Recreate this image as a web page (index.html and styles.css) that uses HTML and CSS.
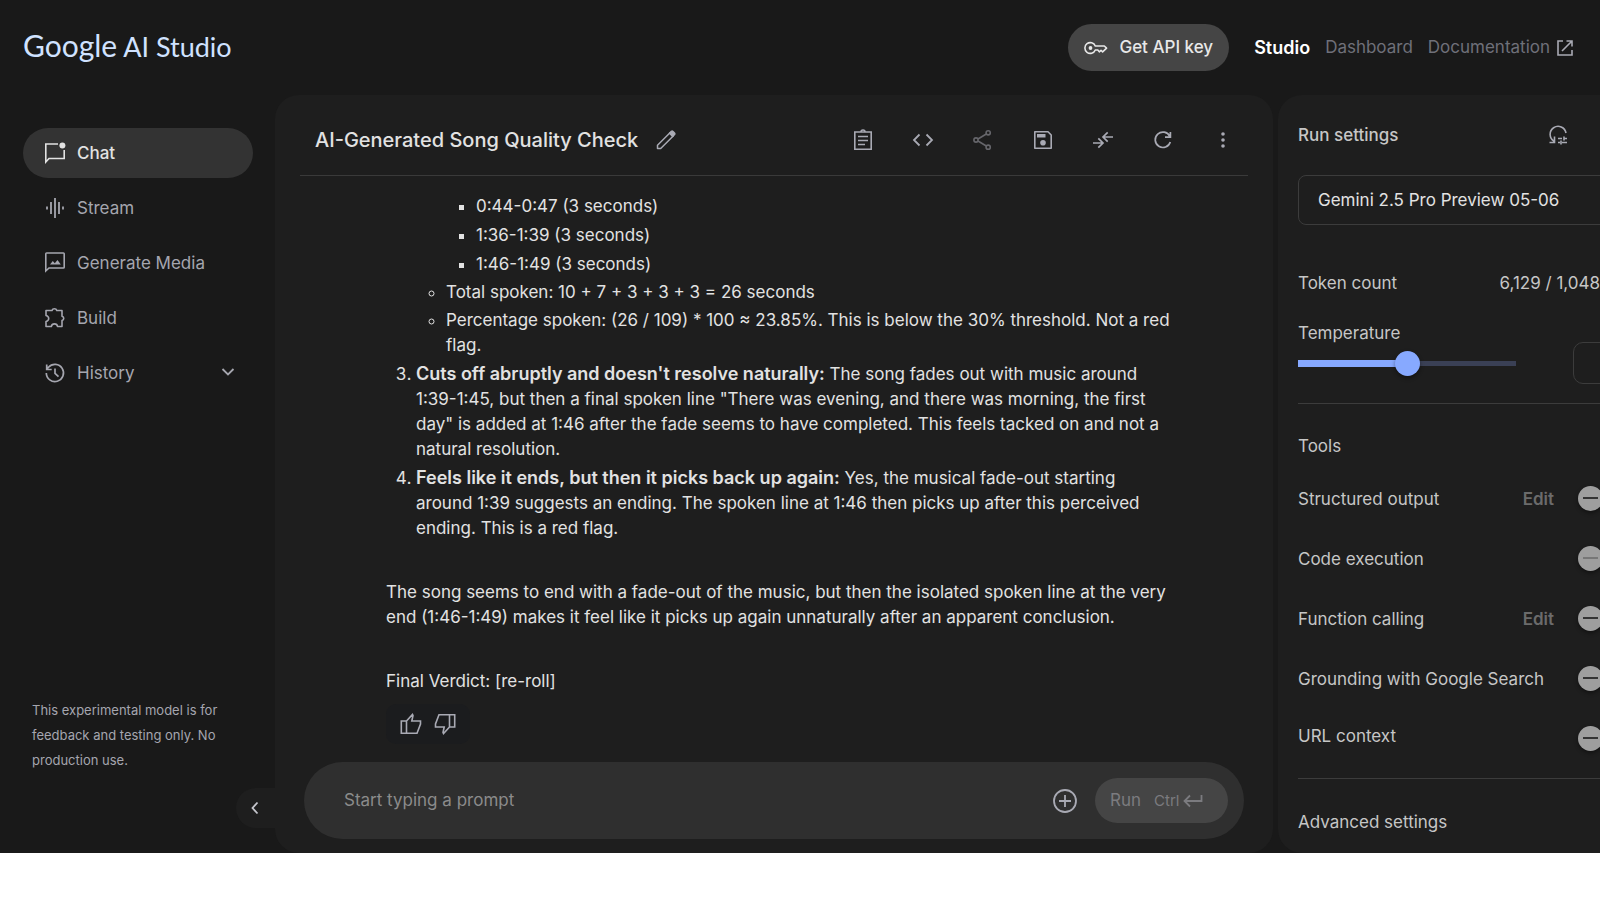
FILE: index.html
```html
<!DOCTYPE html>
<html lang="en">
<head>
<meta charset="utf-8">
<title>Google AI Studio</title>
<link rel="stylesheet" href="styles.css">
</head>
<body>
<div class="app">
  <header class="topbar">
    <div class="logo"><span class="logo-google">Google</span> <span>AI Studio</span></div>
    <nav class="topnav">
      <button class="api-key" type="button">
        <svg width="24" height="16" viewBox="0 0 24 16" fill="none" stroke="currentColor" stroke-width="1.6"><path d="M11.300 6A5.400 5.400 0 1 0 11.300 10H13.800l1.500 1.800 1.700-1.500 1.600 1.600 4-3.700-2.300-2.200z" stroke-linejoin="round"/><circle cx="6.500" cy="8" r="1.900" fill="currentColor" stroke="none"/></svg>
        Get API key
      </button>
      <a class="active" href="#studio">Studio</a>
      <a href="#dashboard">Dashboard</a>
      <a class="docs" href="#docs">Documentation
        <svg width="16" height="16" viewBox="0 0 16 16" fill="none" stroke="currentColor" stroke-width="1.6"><path d="M6 1H1v14h14v-5M9.500 1H15v5.500M15 1 5 11"/></svg>
      </a>
    </nav>
  </header>

  <div class="body">
    <aside class="sidebar">
      <nav class="menu">
        <a class="menu-item selected" href="#chat">
          <svg width="22" height="22" viewBox="0 0 22 22" fill="none" stroke="currentColor" stroke-width="1.6"><path d="M14 2H1.800v18L5 16.500h15.200V8"/><circle cx="18.400" cy="3.400" r="3" fill="currentColor" stroke="none"/></svg>
          Chat
        </a>
        <a class="menu-item" href="#stream">
          <svg width="22" height="22" viewBox="0 0 22 22" fill="none" stroke="currentColor" stroke-width="1.8"><path d="M3 9.500v3M7 5v12M11 1v20M15 5v12M19 9.500v3"/></svg>
          Stream
        </a>
        <a class="menu-item" href="#media">
          <svg width="22" height="22" viewBox="0 0 22 22" fill="none" stroke="currentColor" stroke-width="1.6"><path d="M1.800 19V1.800Q1.800 1 2.600 1H19.400Q20.200 1 20.200 1.800V15.200Q20.200 16 19.400 16H5z"/><path d="M6 12.500 8.800 9l2 2.300L13.500 8l3.300 4.500z" fill="currentColor" stroke="none"/></svg>
          Generate Media
        </a>
        <a class="menu-item" href="#build">
          <svg width="22" height="22" viewBox="0 0 22 22" fill="none" stroke="currentColor" stroke-width="1.600" stroke-linejoin="round"><path d="M2 3.500H8A2.500 2.500 0 0 1 12.800 3.500H18V9.200A2.200 2.200 0 0 1 18 13.500V19.500H13.500C13 16 8 16 7.300 19.500H2V14.500C5.600 13.500 5.600 9.500 2 8.500z"/></svg>
          Build
        </a>
        <a class="menu-item" href="#history">
          <svg width="22" height="22" viewBox="0 0 22 22" fill="none" stroke="currentColor" stroke-width="1.700"><path d="M2.300 11A8.600 8.600 0 1 0 4.500 5.200L2.500 7.300M2.700 2.500v5h5M11 6.500V11.300l3.500 3.300"/></svg>
          History
          <svg class="caret" width="14" height="14" viewBox="0 0 14 14" fill="none" stroke="currentColor" stroke-width="1.800"><path d="M1.500 3 7 8.500 12.500 3"/></svg>
        </a>
      </nav>
      <p class="notice">This experimental model is for<br>feedback and testing only. No<br>production use.</p>
      <button class="collapse" type="button" aria-label="Collapse sidebar">
        <svg width="14" height="14" viewBox="0 0 14 14" fill="none" stroke="currentColor" stroke-width="1.800"><path d="M9.500 1.500 4.500 7l5 5.500"/></svg>
      </button>
    </aside>

    <main class="panel chat">
      <div class="chat-head">
        <h1>AI-Generated Song Quality Check</h1>
        <button class="icon" type="button" aria-label="Edit title">
          <svg width="20" height="20" viewBox="0 0 20 20" fill="none" stroke="currentColor" stroke-width="1.500" stroke-linejoin="round"><path d="M1.500 18.500v-3.200L14 2.800l3.200 3.200L4.700 18.500z"/><path d="m13.500 3.300 1.900-1.900Q16.200.800 17 1.500L18.500 3Q19.200 3.800 18.500 4.600L16.700 6.500z" fill="currentColor"/></svg>
        </button>
        <div class="tools">
          <button class="icon" type="button" aria-label="System instructions">
            <svg width="22" height="22" viewBox="0 0 22 22" fill="none" stroke="currentColor" stroke-width="1.600"><path d="M2.800 3H19.200V20.200H2.800zM6 7.500H16M6 11.500H16M6 15.500H13"/><path d="M9 3a2 2 0 0 1 4 0"/></svg>
          </button>
          <button class="icon" type="button" aria-label="Get code">
            <svg width="22" height="22" viewBox="0 0 22 22" fill="none" stroke="currentColor" stroke-width="1.800"><path d="M7.500 5.500 2 11l5.500 5.500M14.500 5.500 20 11l-5.500 5.500"/></svg>
          </button>
          <button class="icon" type="button" aria-label="Share" disabled>
            <svg width="22" height="22" viewBox="0 0 22 22" fill="none" stroke="currentColor" stroke-width="1.600"><circle cx="4" cy="11" r="2.100"/><circle cx="16.200" cy="3.800" r="2.100"/><circle cx="16.200" cy="18.200" r="2.100"/><path d="M6 10 14.300 5M6 12l8.300 5"/></svg>
          </button>
          <button class="icon" type="button" aria-label="Save">
            <svg width="22" height="22" viewBox="0 0 22 22" fill="none" stroke="currentColor" stroke-width="1.600" stroke-linejoin="round"><path d="M2.800 2.800H16L19.200 6V19.200H2.800z"/><path d="M5 5H13.500V8.500H5z" fill="currentColor" stroke="none"/><circle cx="11" cy="13.700" r="2.800" fill="currentColor" stroke="none"/></svg>
          </button>
          <button class="icon" type="button" aria-label="Compare">
            <svg width="22" height="22" viewBox="0 0 22 22" fill="none" stroke="currentColor" stroke-width="1.700"><path d="M1 14H10.500M6.300 9.300 11 14 6.300 18.700M21 8H11.500M15.700 3.300 11 8 15.700 12.700"/></svg>
          </button>
          <button class="icon" type="button" aria-label="Refresh">
            <svg width="22" height="22" viewBox="0 0 22 22" fill="none" stroke="currentColor" stroke-width="1.700"><path d="M18.300 13A7.700 7.700 0 1 1 17.800 7.300M18.400 3V8.200H13"/></svg>
          </button>
          <button class="icon" type="button" aria-label="More">
            <svg width="22" height="22" viewBox="0 0 22 22" fill="currentColor"><circle cx="11" cy="5" r="1.800"/><circle cx="11" cy="11" r="1.800"/><circle cx="11" cy="17" r="1.800"/></svg>
          </button>
        </div>
      </div>

      <div class="answer">
        <ol start="2">
          <li class="continued">
            <ul>
              <li class="bare"><ul class="times">
                <li>0:44-0:47 (3 seconds)</li>
                <li>1:36-1:39 (3 seconds)</li>
                <li>1:46-1:49 (3 seconds)</li>
              </ul></li>
              <li>Total spoken: 10 + 7 + 3 + 3 + 3 = 26 seconds</li>
              <li>Percentage spoken: (26 / 109) * 100 ≈ 23.85%. This is below the 30% threshold. Not a red<br>flag.</li>
            </ul>
          </li>
          <li><strong>Cuts off abruptly and doesn't resolve naturally:</strong> The song fades out with music around<br>1:39-1:45, but then a final spoken line "There was evening, and there was morning, the first<br>day" is added at 1:46 after the fade seems to have completed. This feels tacked on and not a<br>natural resolution.</li>
          <li><strong>Feels like it ends, but then it picks back up again:</strong> Yes, the musical fade-out starting<br>around 1:39 suggests an ending. The spoken line at 1:46 then picks up after this perceived<br>ending. This is a red flag.</li>
        </ol>
        <p>The song seems to end with a fade-out of the music, but then the isolated spoken line at the very<br>end (1:46-1:49) makes it feel like it picks up again unnaturally after an apparent conclusion.</p>
        <p>Final Verdict: [re-roll]</p>
        <div class="feedback">
          <button class="icon" type="button" aria-label="Good response">
            <svg width="22" height="22" viewBox="0 0 22 22" fill="none" stroke="currentColor" stroke-width="1.600"><path d="M1.300 8H6.500V20.200H1.300zM6.500 8 12.500 1.500 13 2.500 11.800 8H20.500V11L17 20.200H6.500"/></svg>
          </button>
          <button class="icon" type="button" aria-label="Bad response">
            <svg width="22" height="22" viewBox="0 0 22 22" fill="none" stroke="currentColor" stroke-width="1.600"><path d="M20.700 14H15.500V1.800H20.700zM15.500 14 9.500 20.500 9 19.500 10.200 14H1.500V11L5 1.800H15.500"/></svg>
          </button>
        </div>
      </div>

      <form class="prompt">
        <input type="text" placeholder="Start typing a prompt" aria-label="Prompt">
        <button class="icon" type="button" aria-label="Insert assets">
          <svg width="26" height="26" viewBox="0 0 26 26" fill="none" stroke="currentColor" stroke-width="1.800"><circle cx="13" cy="13" r="11"/><path d="M13 7v12M7 13h12"/></svg>
        </button>
        <button class="run" type="button" disabled>Run
          <span class="keys">Ctrl<svg width="20" height="14" viewBox="0 0 20 14" fill="none" stroke="currentColor" stroke-width="1.800"><path d="M18.500 1V7H2M7 1.500 1.500 7 7 12.500"/></svg></span>
        </button>
      </form>
    </main>

    <aside class="panel settings">
      <div class="settings-inner">
        <div class="settings-head">
          <h2>Run settings</h2>
          <button class="icon" type="button" aria-label="Reset settings">
            <svg width="20" height="22" viewBox="0 0 20 22" fill="none" stroke="currentColor" stroke-width="1.600"><path d="M18 9A8 8 0 1 0 6 17.200M6.500 12.500V18.500H1.500M10 14.500H14M16 14.500H19M16 12.500v4M10 18.500H12M14 18.500H19M13 16.500v4"/></svg>
          </button>
        </div>
        <button class="model" type="button">Gemini 2.5 Pro Preview 05-06</button>
        <div class="tokens"><span>Token count</span><span>6,129 / 1,048</span></div>
        <div class="temperature">
          <div class="slider">
            <label for="temp">Temperature</label>
            <input id="temp" type="range" min="0" max="2" step="0.05" value="1">
          </div>
          <input class="temp-value" type="text" aria-label="Temperature value">
        </div>
        <section class="tool-list">
          <h3>Tools</h3>
          <div class="tool"><label for="t1">Structured output</label><button type="button" disabled>Edit</button><input id="t1" type="checkbox"></div>
          <div class="tool"><label for="t2">Code execution</label><input id="t2" type="checkbox" disabled></div>
          <div class="tool"><label for="t3">Function calling</label><button type="button" disabled>Edit</button><input id="t3" type="checkbox"></div>
          <div class="tool"><label for="t4">Grounding with Google Search</label><input id="t4" type="checkbox"></div>
          <div class="tool plain"><label for="t5">URL context</label><input id="t5" type="checkbox"></div>
        </section>
        <button class="advanced" type="button">Advanced settings</button>
      </div>
    </aside>
  </div>
</div>
</body>
</html>
```
FILE: styles.css
```css
* { box-sizing: border-box; }
body {
  margin: 0;
  background: #fff;
  color: #e2e2e2;
  font: 17px/25px Inter, "Liberation Sans", sans-serif;
}
button, input { font: inherit; color: inherit; }
button { border: 0; padding: 0; background: none; }
a { color: inherit; text-decoration: none; }
svg { display: block; flex: none; }
h1, h2, h3, p, ol, ul { margin: 0; padding: 0; }

.app {
  height: calc(100vh - 47px);
  display: flex;
  flex-direction: column;
  overflow: hidden;
  background: #191919;
}

.topbar {
  height: 95px;
  flex: none;
  display: flex;
  align-items: center;
  justify-content: space-between;
  padding: 0 27px 0 23px;
}
.logo { padding-bottom: 3px; color: #d0e2ff; font: 27px/36px Lato, sans-serif; }
.logo-google { font-size: 30px; }
.topnav { display: flex; align-items: center; gap: 15px; color: #6f7079; }
.topnav .active { color: #fff; font-size: 18px; font-weight: 600; }
.api-key {
  display: flex;
  align-items: center;
  gap: 11px;
  height: 47px;
  padding: 0 16px;
  margin-right: 10px;
  border-radius: 24px;
  background: #454545;
  color: #e8e8e8;
  font-weight: 500;
}
.docs { display: flex; align-items: center; gap: 7px; }
.docs svg { color: #a9aab4; }

.body { flex: 1; min-height: 0; display: flex; }

.sidebar {
  position: relative;
  width: 275px;
  flex: none;
  display: flex;
  flex-direction: column;
  justify-content: space-between;
  padding: 33px 22px 80px 23px;
  color: #a5a6af;
}
.menu { display: grid; gap: 5px; }
.menu-item {
  display: flex;
  align-items: center;
  gap: 11px;
  height: 50px;
  padding: 0 18px 0 21px;
  border-radius: 25px;
}
.menu-item.selected { background: #333; color: #e2e2e2; font-weight: 500; }
.caret { margin-left: auto; }
.notice { padding-left: 9px; font-size: 13px; }
.collapse {
  position: absolute;
  right: 0;
  bottom: 25px;
  width: 39px;
  height: 40px;
  padding-left: 12px;
  border-radius: 20px 0 0 20px;
  background: #1e1e1e;
  color: #c4c5cc;
}

.panel { background: #1e1e1e; border-radius: 24px; }
.icon { display: grid; place-items: center; color: #a9aab4; }
.icon:disabled { color: #66666b; }

.chat {
  flex: 1;
  min-width: 0;
  display: flex;
  flex-direction: column;
  padding: 0 25px 14px;
}
.chat-head {
  flex: none;
  height: 81px;
  display: flex;
  align-items: center;
  gap: 18px;
  padding: 10px 14px 0 15px;
  border-bottom: 1px solid #3a3a3a;
}
h1 { font-size: 20px; font-weight: 500; }
.tools { margin-left: auto; display: flex; gap: 38px; }

.answer {
  flex: 1;
  min-height: 0;
  padding: 18px 0 0 86px;
  white-space: nowrap;
}
ol { padding-left: 30px; }
ol ul { padding-left: 30px; list-style: circle; }
ol > li + li { margin-top: 4px; }
ul li + li { margin-top: 3px; }
.times li + li { margin-top: 4px; }
ol .times { list-style: square; }
.continued, .bare { list-style: none; }
strong { font-size: 18px; font-weight: 600; line-height: 18px; }
.answer p { margin-top: 39px; }
.feedback {
  width: 84px;
  height: 40px;
  margin-top: 10px;
  display: flex;
  align-items: center;
  justify-content: center;
  gap: 12px;
  border-radius: 10px;
  background: #1b1c1e;
}

.prompt {
  flex: none;
  display: flex;
  align-items: center;
  height: 77px;
  margin: 0 4px;
  padding: 0 16px 0 40px;
  border-radius: 39px;
  background: #2f2f2f;
}
.prompt input {
  flex: 1;
  min-width: 0;
  padding: 0;
  border: 0;
  outline: 0;
  background: none;
}
.prompt input::placeholder { color: #8b8b8b; opacity: 1; }
.run {
  display: flex;
  align-items: center;
  gap: 13px;
  height: 45px;
  width: 133px;
  margin-left: 17px;
  padding-left: 15px;
  border-radius: 23px;
  background: #454545;
  color: #7b7b7f;
}
.keys { display: flex; align-items: center; gap: 4px; font-size: 15px; }

.settings {
  width: 322px;
  flex: none;
  margin-left: 5px;
  padding-left: 20px;
  border-radius: 24px 0 0 24px;
  overflow: hidden;
  color: #c6c6c6;
}
.settings-inner { width: 330px; display: flex; flex-direction: column; }
.settings-head {
  display: flex;
  align-items: center;
  justify-content: space-between;
  height: 80px;
  padding-right: 60px;
}
h2, h3 { font-size: 17px; font-weight: 400; }
h2 { font-weight: 500; }
.model {
  height: 50px;
  padding-left: 19px;
  border: 1px solid #3c3c3c;
  border-radius: 8px;
  text-align: left;
  color: #e2e2e2;
}
.tokens { display: flex; margin-top: 46px; padding-right: 28px; justify-content: space-between; }
.temperature {
  display: flex;
  align-items: flex-end;
  justify-content: space-between;
  margin-top: 25px;
  padding-bottom: 19px;
}
.slider { width: 218px; display: grid; padding-bottom: 8px; gap: 5px; }
.slider input {
  appearance: none;
  width: 100%;
  height: 25px;
  margin: 0;
  background: linear-gradient(90deg, #87a9ff 50%, #0000 50%) 0 center / 100% 7px no-repeat,
    linear-gradient(#3a4055, #3a4055) 0 center / 100% 5px no-repeat;
  border-radius: 4px;
}
.slider input::-webkit-slider-thumb {
  appearance: none;
  width: 25px;
  height: 25px;
  border-radius: 50%;
  background: #87a9ff;
  box-shadow: 0 2px 4px #0006;
}
.temp-value {
  width: 55px;
  height: 42px;
  border: 1px solid #3c3c3c;
  border-radius: 10px;
  background: none;
}
.tool-list {
  border-top: 1px solid #3c3c3c;
  border-bottom: 1px solid #3c3c3c;
  padding: 30px 0 10px;
}
h3 { margin-bottom: 9px; }
.tool { display: flex; align-items: center; height: 60px; padding-right: 25px; }
.tool label { margin-right: auto; padding-top: 2px; }
.tool.plain label { padding: 0 0 4px; }
.tool button { margin-right: 24px; padding-top: 2px; font-weight: 600; color: #6b6b6b; }
.tool input {
  appearance: none;
  width: 25px;
  height: 25px;
  margin: 0;
  border-radius: 50%;
  background: linear-gradient(#333, #333) center / 15px 2px no-repeat #9e9e9e;
  box-shadow: 0 2px 4px #0006;
}
.tool input:disabled {
  background: linear-gradient(#777, #777) center / 15px 2px no-repeat #9e9e9e;
}
.advanced { margin-top: 31px; text-align: left; }
```
